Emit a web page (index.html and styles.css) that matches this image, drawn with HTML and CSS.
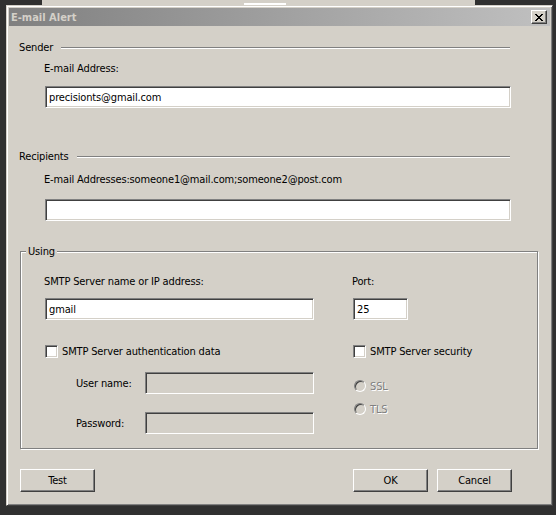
FILE: index.html
```html
<!DOCTYPE html>
<html>
<head>
<meta charset="utf-8">
<title>E-mail Alert</title>
<link rel="stylesheet" href="styles.css">
</head>
<body>
<div class="backdrop">
  <div class="behind"><span class="behind-bar"></span></div>
</div>
<div class="dialog">
  <div class="titlebar">
    <span class="title">E-mail Alert</span>
    <button class="close" aria-label="Close"><svg width="8" height="7" viewBox="0 0 8 7" shape-rendering="crispEdges"><path d="M0 0h2v1H0zM6 0h2v1H6zM1 1h2v1H1zM5 1h2v1H5zM2 2h4v1H2zM3 3h2v1H3zM2 4h4v1H2zM1 5h2v1H1zM5 5h2v1H5zM0 6h2v1H0zM6 6h2v1H6z" fill="#000"/></svg></button>
  </div>
  <div class="content">
    <div class="hdr"><span>Sender</span><span class="etch"></span></div>
    <div class="block">
      <div class="lbl lbl-1">E-mail Address:</div>
      <input class="field wide wide-1" type="text" value="precisionts@gmail.com">
    </div>
    <div class="hdr hdr-2"><span>Recipients</span><span class="etch"></span></div>
    <div class="block">
      <div class="lbl lbl-2">E-mail Addresses:someone1@mail.com;someone2@post.com</div>
      <input class="field wide wide-2" type="text" value="">
    </div>
    <fieldset class="group">
      <legend>Using</legend>
      <div class="group-body">
        <div class="cols">
          <div class="col-left">
            <div class="lbl">SMTP Server name or IP address:</div>
            <input class="field server" type="text" value="gmail">
          </div>
          <div class="col-right">
            <div class="lbl">Port:</div>
            <input class="field port" type="text" value="25">
          </div>
        </div>
        <div class="cols row-check">
          <label class="col-left check"><input type="checkbox"><span>SMTP Server authentication data</span></label>
          <label class="col-right check"><input type="checkbox"><span>SMTP Server security</span></label>
        </div>
        <div class="cols row-auth">
          <div class="col-left">
            <div class="auth-row"><span class="auth-lbl">User name:</span><input class="field small" type="text" disabled></div>
            <div class="auth-row pw"><span class="auth-lbl">Password:</span><input class="field small" type="password" disabled></div>
          </div>
          <div class="col-right radios">
            <label class="radio"><input type="radio" name="sec" disabled><span>SSL</span></label>
            <label class="radio tls"><input type="radio" name="sec" disabled><span>TLS</span></label>
          </div>
        </div>
      </div>
    </fieldset>
    <div class="buttons">
      <button class="btn">Test</button>
      <span class="spacer"></span>
      <button class="btn ok">OK</button>
      <button class="btn">Cancel</button>
    </div>
  </div>
</div>
</body>
</html>
```
FILE: styles.css
```css
* { box-sizing: border-box; }
html, body { margin: 0; }
body {
  width: 556px;
  height: 515px;
  overflow: hidden;
  background: #303030;
  font: 11px/13px "DejaVu Sans Condensed", "Liberation Sans", sans-serif;
  letter-spacing: -0.15px;
  color: #000;
}
.backdrop { height: 5px; padding-left: 42px; }
.behind { width: 433px; height: 5px; background: #d4d0c8; padding: 3px 0 0 202px; }
.behind-bar { display: block; width: 42px; height: 2px; background: #fff; }

.dialog {
  margin-left: 6px;
  width: 547px;
  height: 501px;
  background: #d4d0c8;
  border: 1px solid;
  border-color: #d4d0c8 #404040 #404040 #d4d0c8;
  box-shadow: inset 1px 1px 0 #fff, inset -1px -1px 0 #808080;
  padding: 2px;
}
.titlebar {
  height: 18px;
  display: flex;
  align-items: center;
  justify-content: space-between;
  background: linear-gradient(to right, #808080, #c0c0c0);
  padding: 0 3px 0 2px;
}
.title { font-weight: bold; color: #d4d0c8; letter-spacing: 0; }
.close {
  width: 16px;
  height: 14px;
  padding: 0;
  display: flex;
  align-items: center;
  justify-content: center;
  background: #d4d0c8;
  border: 1px solid;
  border-color: #fff #404040 #404040 #fff;
  box-shadow: inset -1px -1px 0 #808080;
}
.close svg { display: block; }

.content { padding: 0 11px 0 10px; }
.hdr { display: flex; align-items: center; gap: 8px; height: 13px; margin: 15px 29px 0 0; }
.hdr-2 { margin-top: 42px; }
.etch { flex: 1; height: 2px; border-top: 1px solid #808080; border-bottom: 1px solid #fff; }
.block { margin: 0 28px 0 25px; }
.lbl { height: 13px; white-space: nowrap; }
.lbl-1 { margin-top: 8px; }
.lbl-2 { margin-top: 10px; }

.field {
  display: block;
  height: 22px;
  margin: 0;
  padding: 0 0 0 3px;
  border: 1px solid;
  border-color: #808080 #fff #fff #808080;
  box-shadow: inset 1px 1px 0 #404040, inset -1px -1px 0 #d4d0c8;
  background: #fff;
  font: inherit;
  letter-spacing: inherit;
  color: #000;
  outline: none;
}
.field:disabled { background: #d4d0c8; }
.wide { width: 466px; margin-left: 1px; }
.wide-1 { margin-top: 11px; }
.wide-2 { margin-top: 13px; }

.group {
  margin: 24px 0 0 1px;
  width: 518px;
  min-width: 0;
  padding: 0;
  border: 1px solid #808080;
  box-shadow: 1px 1px 0 #fff, inset 1px 1px 0 #fff;
}
.group legend {
  margin-left: 5px;
  padding: 0 2px;
  background: #d4d0c8;
  line-height: 13px;
}
.group-body { padding: 17px 0 14px 23px; }
.cols { display: flex; }
.col-left { width: 308px; }
.server { width: 269px; margin: 10px 0 0 1px; }
.port { width: 55px; margin: 10px 0 0 1px; }

.row-check { margin-top: 25px; height: 13px; }
.check { display: flex; align-items: center; gap: 4px; white-space: nowrap; }
.check input {
  appearance: none;
  -webkit-appearance: none;
  width: 13px;
  height: 13px;
  margin: 0 0 0 1px;
  border: 1px solid;
  border-color: #808080 #fff #fff #808080;
  box-shadow: inset 1px 1px 0 #404040, inset -1px -1px 0 #d4d0c8;
  background: #fff;
}
.row-auth { margin-top: 14px; }
.auth-row { display: flex; align-items: center; padding-left: 32px; }
.auth-lbl { width: 69px; white-space: nowrap; }
.small { width: 169px; }
.pw { margin-top: 18px; }

.radios { display: flex; flex-direction: column; padding-top: 8px; }
.radio {
  display: flex;
  align-items: center;
  gap: 4px;
  height: 12px;
  color: #808080;
  text-shadow: 1px 1px 0 #fff;
}
.radio input {
  appearance: none;
  -webkit-appearance: none;
  width: 12px;
  height: 12px;
  margin: 0 0 0 2px;
  border-radius: 50%;
  border: 1px solid;
  border-color: #808080 #fff #fff #808080;
  box-shadow: inset 1px 1px 0 #404040, inset -1px -1px 0 #d4d0c8;
  background: #d4d0c8;
}
.tls { margin-top: 11px; }

.buttons { display: flex; margin: 20px 27px 0 1px; }
.spacer { flex: 1; }
.btn {
  width: 75px;
  height: 23px;
  padding: 0;
  font: inherit;
  letter-spacing: inherit;
  color: #000;
  background: #d4d0c8;
  border: 1px solid;
  border-color: #fff #404040 #404040 #fff;
  box-shadow: inset -1px -1px 0 #808080;
}
.ok { margin-right: 9px; }
```
